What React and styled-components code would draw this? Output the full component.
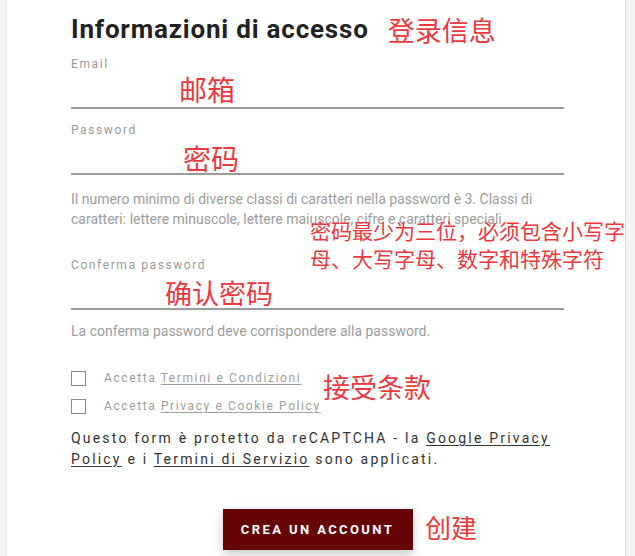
import React from 'react'
import styled, { createGlobalStyle } from 'styled-components'

const GlobalStyle = createGlobalStyle`
  html, body {
    margin: 0;
    padding: 0;
    background: #f4f4f4;
    font-family: Roboto, "Liberation Sans", sans-serif;
  }
`;

const Panel = styled.div`
  margin-left: 6px;
  width: 620px;
  min-height: 556px;
  background: #fff;
  border-left: 1px solid #ececec;
  border-right: 1px solid #dadada;
  padding: 12px 0 0 64px;
  box-sizing: border-box;
`;

const Content = styled.div`
  width: 493px;
  display: flex;
  flex-direction: column;
`;

const TitleRow = styled.div`
  display: flex;
  align-items: center;
  gap: 19px;
`;

const Title = styled.h2`
  margin: 0;
  font-size: 26px;
  line-height: 34px;
  font-weight: 700;
  letter-spacing: 0.8px;
  color: #222;
`;

const Note = styled.span`
  font-family: "Noto Sans CJK SC", sans-serif;
  color: #ea3a40;
  font-size: ${p => p.$size || 27}px;
  line-height: ${p => p.$lh || p.$size || 27}px;
  letter-spacing: 0;
  white-space: nowrap;
`;

const FloatNote = styled(Note)`
  position: absolute;
  left: ${p => p.$x}px;
  top: ${p => p.$y}px;
`;

const Field = styled.div`
  position: relative;
  margin-top: ${p => p.$top}px;
`;

const Label = styled.div`
  font-size: 12px;
  line-height: 14px;
  letter-spacing: 1.6px;
  color: #9a9a9a;
`;

const Input = styled.div`
  height: 36px;
  border-bottom: 2px solid #9b9b9b;
`;

const Help = styled.p`
  position: relative;
  margin: ${p => p.$top}px 0 0;
  font-size: 14px;
  line-height: 20px;
  color: #9d9d9d;
  letter-spacing: 0;
`;

const Checks = styled.div`
  position: relative;
  margin-top: 27px;
  display: flex;
  flex-direction: column;
  gap: 8px;
`;

const CheckRow = styled.label`
  display: flex;
  align-items: center;
  gap: 18px;
  height: 20px;
  font-size: 12px;
  letter-spacing: 1.6px;
  color: #9d9d9d;
`;

const Box = styled.span`
  width: 13px;
  height: 13px;
  border: 1px solid #8a8a8a;
  background: #fff;
`;

const GrayLink = styled.span`
  text-decoration: underline;
  text-underline-offset: 2px;
`;

const Legal = styled.p`
  margin: 12px 0 0;
  font-size: 14px;
  line-height: 21px;
  letter-spacing: 2.2px;
  color: #333;
`;

const DarkLink = styled.span`
  text-decoration: underline;
  text-underline-offset: 2px;
`;

const ButtonRow = styled.div`
  position: relative;
  margin-top: 39px;
  display: flex;
  justify-content: center;
`;

const Button = styled.button`
  width: 190px;
  height: 41px;
  border: none;
  background: #650505;
  color: #fff;
  font-family: Roboto, "Liberation Sans", sans-serif;
  font-size: 13px;
  font-weight: 700;
  letter-spacing: 2.4px;
  box-shadow: 0 4px 10px rgba(0, 0, 0, 0.22);
  cursor: pointer;
`;

function App() {
  return (
    <>
      <GlobalStyle />
      <Panel>
        <Content>
          <TitleRow>
            <Title>Informazioni di accesso</Title>
            <Note $size={27}>登录信息</Note>
          </TitleRow>

          <Field $top={11}>
            <Label>Email</Label>
            <Input />
            <FloatNote $size={28} $x={108} $y={18}>邮箱</FloatNote>
          </Field>

          <Field $top={14}>
            <Label>Password</Label>
            <Input />
            <FloatNote $size={28} $x={112} $y={21}>密码</FloatNote>
          </Field>

          <Help $top={14}>
            Il numero minimo di diverse classi di caratteri nella password è 3. Classi di caratteri: lettere minuscole, lettere maiuscole, cifre e caratteri speciali.
            <FloatNote $size={21} $lh={28} $x={239} $y={27}>
              密码最少为三位，必须包含小写字<br />母、大写字母、数字和特殊字符
            </FloatNote>
          </Help>

          <Field $top={29}>
            <Label>Conferma password</Label>
            <Input />
            <FloatNote $size={27} $x={94} $y={21}>确认密码</FloatNote>
          </Field>

          <Help $top={11}>La conferma password deve corrispondere alla password.</Help>

          <Checks>
            <CheckRow>
              <Box />
              <span>Accetta <GrayLink>Termini e Condizioni</GrayLink></span>
            </CheckRow>
            <CheckRow>
              <Box />
              <span>Accetta <GrayLink>Privacy e Cookie Policy</GrayLink></span>
            </CheckRow>
            <FloatNote $size={27} $x={252} $y={5}>接受条款</FloatNote>
          </Checks>

          <Legal>
            Questo form è protetto da reCAPTCHA - la <DarkLink>Google Privacy Policy</DarkLink> e i <DarkLink>Termini di Servizio</DarkLink> sono applicati.
          </Legal>

          <ButtonRow>
            <Button>CREA UN ACCOUNT</Button>
            <FloatNote $size={26} $x={354} $y={5}>创建</FloatNote>
          </ButtonRow>
        </Content>
      </Panel>
    </>
  )
}

export default App
